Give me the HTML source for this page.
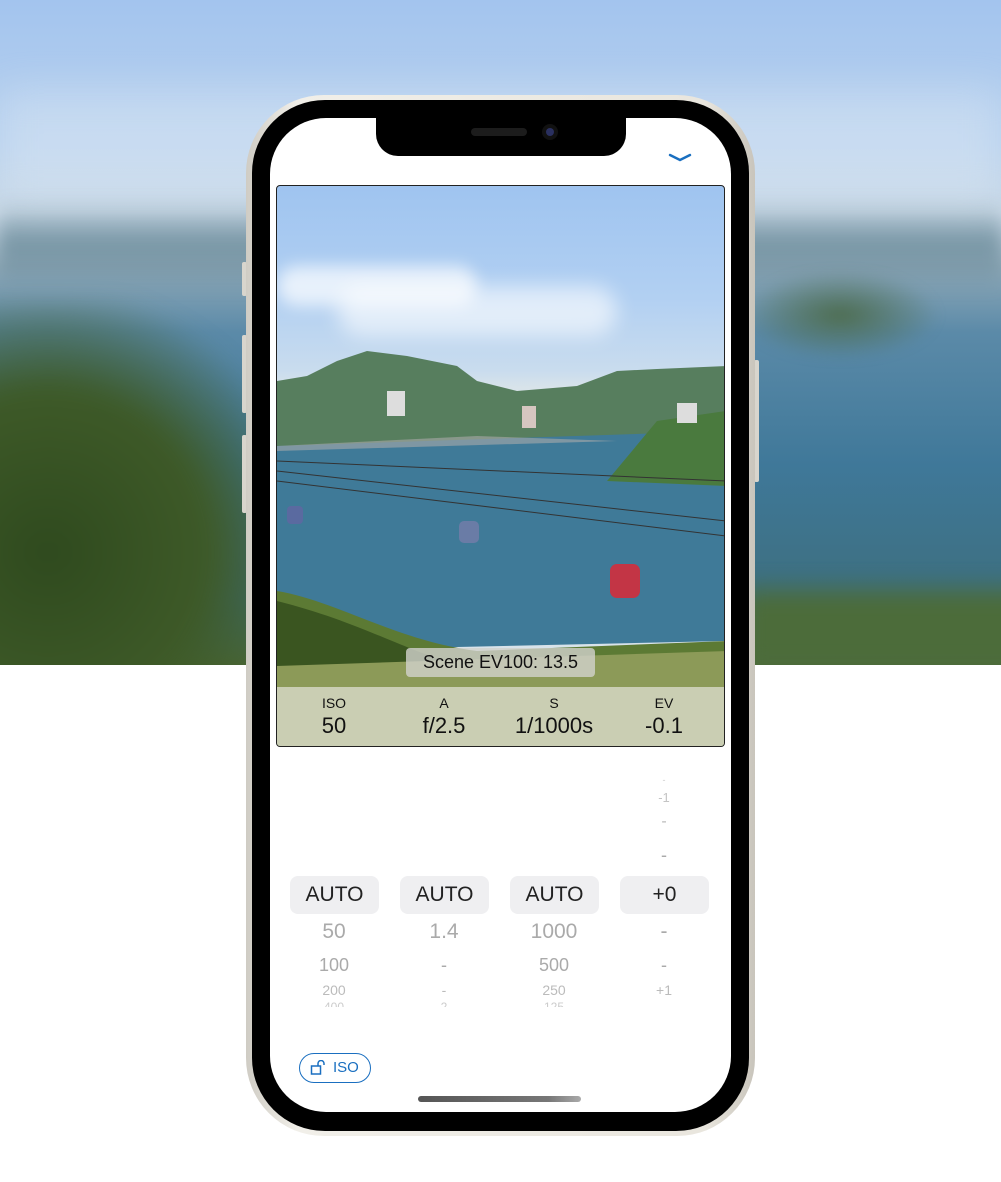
<!DOCTYPE html><html><head><style>
*{margin:0;padding:0;box-sizing:border-box}
body{width:1001px;height:1182px;position:relative;overflow:hidden;background:#fff;font-family:"Liberation Sans",sans-serif}
.bg{position:absolute;left:0;top:0;width:1001px;height:665px;overflow:hidden;background:linear-gradient(180deg,#a3c4ee 0%,#b9d2ee 22%,#c8d8e6 32%,#8fa9b8 40%,#5b8aa8 50%,#3f7899 70%,#3d6f7f 90%,#4d6a3a 100%)}
.bg .l{position:absolute;left:-60px;top:300px;width:360px;height:420px;background:radial-gradient(ellipse at 30% 60%,#2f4a1e 0%,#3e5a28 45%,rgba(70,100,60,0) 75%);filter:blur(10px)}
.bg .r{position:absolute;left:740px;top:270px;width:200px;height:90px;background:radial-gradient(ellipse,#4e6d50 0%,rgba(80,110,90,0) 70%);filter:blur(6px)}
.bg .m{position:absolute;left:0;top:200px;width:1001px;height:90px;background:linear-gradient(180deg,rgba(110,140,160,0),rgba(90,125,140,.6),rgba(90,125,140,0));filter:blur(8px)}
.bg .g{position:absolute;left:740px;top:590px;width:300px;height:80px;background:#4c6c3a;filter:blur(12px)}
.bg .h{position:absolute;left:0;top:90px;width:1001px;height:110px;background:rgba(230,238,245,.35);filter:blur(20px)}
.phone{position:absolute;left:246px;top:95px;width:509px;height:1041px;border-radius:78px;background:linear-gradient(90deg,#cfccc4,#f1efe9 10%,#e9e6de 90%,#c9c5bc);}
.bez{position:absolute;left:6px;top:5px;right:6px;bottom:5px;border-radius:73px;background:#000}
.scr{position:absolute;left:270px;top:118px;width:461px;height:994px;border-radius:56px;background:#fff;overflow:hidden}
.notch{position:absolute;left:376px;top:118px;width:250px;height:38px;background:#000;border-radius:0 0 22px 22px}
.spk{position:absolute;left:471px;top:128px;width:56px;height:8px;border-radius:4px;background:#1c1c1c}
.cam{position:absolute;left:542px;top:124px;width:16px;height:16px;border-radius:50%;background:#111}
.cam:after{content:"";position:absolute;left:4px;top:4px;width:8px;height:8px;border-radius:50%;background:#2a3060}
.btn{position:absolute;background:#d8d5cd;width:5px}
.photo{position:absolute;left:276px;top:185px;width:449px;height:562px;border:1.5px solid #222;border-radius:4px;overflow:hidden;background:linear-gradient(180deg,#9fc4f0 0%,#b2d0f2 20%,#c9dcee 33%,#d8e3ea 36%)}
.ph{position:absolute}
.bar{position:absolute;left:0;top:501px;width:100%;height:60px;background:rgba(228,228,218,.7)}
.col{position:absolute;text-align:center;width:110px;color:#111}
.col .a{font-size:14px;position:absolute;top:8px;width:100%}
.col .b{font-size:22px;position:absolute;top:26px;width:100%}
.ev{position:absolute;left:129px;top:462px;width:189px;height:29px;background:rgba(210,210,205,.8);border-radius:4px;font-size:18px;text-align:center;line-height:29px;color:#111}
.pk{position:absolute;width:88px;text-align:center;color:#aaa}
.box{position:absolute;top:876px;width:89px;height:38px;background:#efeff1;border-radius:8px;font-size:21px;text-align:center;line-height:38px;color:#222}
</style></head><body>
<div class="bg"><div class="h"></div><div class="m"></div><div class="l"></div><div class="r"></div><div class="g"></div></div>
<div class="btn" style="left:242px;top:262px;height:34px;border-radius:2px"></div>
<div class="btn" style="left:242px;top:335px;height:78px;border-radius:2px"></div>
<div class="btn" style="left:242px;top:435px;height:78px;border-radius:2px"></div>
<div class="btn" style="left:754px;top:360px;height:122px;border-radius:2px"></div>
<div class="phone"><div class="bez"></div></div>
<div class="scr"></div>
<div class="notch"></div><div class="spk"></div><div class="cam"></div>
<svg style="position:absolute;left:668px;top:152px" width="24" height="10"><path d="M2 3 L12 8 L22 3" stroke="#1a6fc0" stroke-width="2.4" fill="none" stroke-linecap="round"/></svg>
<div class="photo">
<div class="ph" style="left:0;top:80px;width:200px;height:40px;background:rgba(255,255,255,.7);border-radius:30px;filter:blur(8px)"></div>
<div class="ph" style="left:60px;top:100px;width:280px;height:50px;background:rgba(255,255,255,.6);border-radius:30px;filter:blur(10px)"></div>
<svg class="ph" style="left:0;top:165px" width="449" height="400">
<path d="M0 30 L30 25 L60 10 L90 0 L130 5 L180 15 L200 30 L240 40 L300 35 L340 20 L380 18 L449 15 L449 80 L400 95 L0 100Z" fill="#577e5e"/>
<path d="M0 95 L449 80 L449 290 L0 300Z" fill="#3f7a98"/>
<path d="M330 130 L380 70 L449 60 L449 135 Z" fill="#4a7a3e"/>
<rect x="110" y="40" width="18" height="25" fill="#ddd"/><rect x="245" y="55" width="14" height="22" fill="#d6c6c0"/><rect x="400" y="52" width="20" height="20" fill="#ddd"/>
<path d="M0 95 L200 85 L340 90 L0 100Z" fill="#aaa" opacity=".6"/>
<path d="M0 120 L449 170" stroke="#333" stroke-width="1"/><path d="M0 130 L449 185" stroke="#333" stroke-width="1"/><path d="M0 110 L449 130" stroke="#333" stroke-width="1"/>
<rect x="10" y="155" width="16" height="18" rx="4" fill="#5a6aa0"/><rect x="182" y="170" width="20" height="22" rx="5" fill="#6a7ca6"/><rect x="333" y="213" width="30" height="34" rx="7" fill="#c33545"/>
<path d="M0 240 C60 250 120 290 200 300 L449 290 L449 400 L0 400Z" fill="#5c7a34"/>
<path d="M0 250 C80 270 130 300 170 310 L0 330Z" fill="#3a5520"/>
<path d="M0 315 L449 300 L449 400 L0 400Z" fill="#8c9a58"/>
</svg>
<div class="ev">Scene EV100: 13.5</div>
<div class="bar">
<div class="col" style="left:2px"><div class="a">ISO</div><div class="b">50</div></div>
<div class="col" style="left:112px"><div class="a">A</div><div class="b">f/2.5</div></div>
<div class="col" style="left:222px"><div class="a">S</div><div class="b">1/1000s</div></div>
<div class="col" style="left:332px"><div class="a">EV</div><div class="b">-0.1</div></div>
</div></div>
<div class="box" style="left:290px">AUTO</div>
<div class="box" style="left:400px">AUTO</div>
<div class="box" style="left:510px">AUTO</div>
<div class="box" style="left:620px">+0</div>
<div class="pk" style="left:290px;top:920px;font-size:21px">50</div>
<div class="pk" style="left:290px;top:955px;font-size:18px">100</div>
<div class="pk" style="left:290px;top:982px;font-size:14px;color:#bbb">200</div>
<div class="pk" style="left:290px;top:1000px;font-size:12px;color:#ccc;height:7px;overflow:hidden;line-height:14px">400</div>
<div class="pk" style="left:400px;top:920px;font-size:21px">1.4</div>
<div class="pk" style="left:400px;top:955px;font-size:18px">-</div>
<div class="pk" style="left:400px;top:982px;font-size:14px;color:#bbb">-</div>
<div class="pk" style="left:400px;top:1000px;font-size:12px;color:#ccc;height:7px;overflow:hidden;line-height:14px">2</div>
<div class="pk" style="left:510px;top:920px;font-size:21px">1000</div>
<div class="pk" style="left:510px;top:955px;font-size:18px">500</div>
<div class="pk" style="left:510px;top:982px;font-size:14px;color:#bbb">250</div>
<div class="pk" style="left:510px;top:1000px;font-size:12px;color:#ccc;height:7px;overflow:hidden;line-height:14px">125</div>
<div class="pk" style="left:620px;top:920px;font-size:21px">-</div>
<div class="pk" style="left:620px;top:955px;font-size:18px">-</div>
<div class="pk" style="left:620px;top:982px;font-size:14px;color:#bbb">+1</div>
<div class="pk" style="left:620px;top:1000px;font-size:12px;color:#ccc;height:7px;overflow:hidden;line-height:14px">-</div>
<div class="pk" style="left:620px;top:845px;font-size:18px">-</div>
<div class="pk" style="left:620px;top:813px;font-size:16px;color:#bbb">-</div>
<div class="pk" style="left:620px;top:790px;font-size:13px;color:#c4c4c4">-1</div>
<div class="pk" style="left:620px;top:775px;font-size:9px;color:#ccc">-</div>
<div style="position:absolute;left:299px;top:1053px;width:72px;height:30px;border:1.5px solid #1a6fc0;border-radius:15px;color:#1a6fc0;font-size:15px;line-height:27px;padding-left:33px">ISO</div>
<svg style="position:absolute;left:310px;top:1060px" width="20" height="16"><rect x="1.5" y="6" width="9" height="8" fill="none" stroke="#1a6fc0" stroke-width="1.5"/><path d="M8 6 V3.5 A3 3 0 0 1 14 3.5 V5" fill="none" stroke="#1a6fc0" stroke-width="1.5"/></svg>
<div style="position:absolute;left:418px;top:1096px;width:163px;height:6px;border-radius:3px;background:linear-gradient(90deg,#555,#777 80%,#aaa)"></div>
</body></html>
